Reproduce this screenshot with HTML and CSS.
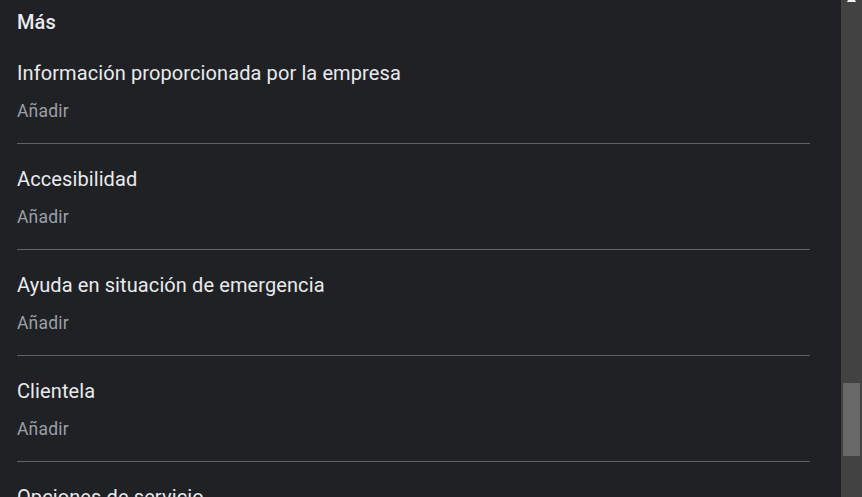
FILE: index.html
```html
<!DOCTYPE html>
<html lang="es">
<head>
<meta charset="utf-8">
<title>Más</title>
<link rel="stylesheet" href="styles.css">
</head>
<body>
<div class="frame">
  <main class="content">
    <h2 class="title">Más</h2>
    <section class="item">
      <h3 class="item-title">Información proporcionada por la empresa</h3>
      <div class="item-action">Añadir</div>
    </section>
    <section class="item">
      <h3 class="item-title">Accesibilidad</h3>
      <div class="item-action">Añadir</div>
    </section>
    <section class="item">
      <h3 class="item-title">Ayuda en situación de emergencia</h3>
      <div class="item-action">Añadir</div>
    </section>
    <section class="item">
      <h3 class="item-title">Clientela</h3>
      <div class="item-action">Añadir</div>
    </section>
    <section class="item">
      <h3 class="item-title">Opciones de servicio</h3>
      <div class="item-action">Añadir</div>
    </section>
  </main>
  <div class="scrollbar">
    <svg class="scroll-arrow" width="21" height="3" viewBox="0 0 21 3"><polygon points="7,0 14,0 15,2 6,2" fill="#f1f1f1"/></svg>
    <div class="scroll-thumb"></div>
  </div>
</div>
</body>
</html>
```

FILE: styles.css
```css
html, body {
  margin: 0;
  padding: 0;
  height: 100%;
  background: #202124;
  overflow: hidden;
}

.frame {
  display: flex;
  height: 497px;
  width: 862px;
  font-family: Roboto, "Liberation Sans", Arial, sans-serif;
}

.content {
  flex: 1;
  overflow: hidden;
  padding: 8px 31px 0 17px;
}

.title {
  margin: 0 0 2px;
  font-size: 20px;
  line-height: 28px;
  font-weight: 500;
  letter-spacing: 0.1px;
  color: #e8eaed;
}

.item {
  padding: 21px 0 20px;
  border-bottom: 1px solid #5f6368;
}

.item-title {
  margin: 0 0 12px;
  font-size: 20px;
  line-height: 28px;
  font-weight: 400;
  letter-spacing: 0.1px;
  color: #e8eaed;
}

.item-action {
  font-size: 17.5px;
  line-height: 24px;
  letter-spacing: 0.2px;
  color: #9aa0a6;
}

.scrollbar {
  width: 21px;
  flex: none;
  background: #424242;
  display: flex;
  flex-direction: column;
}

.scroll-arrow {
  display: block;
}

.scroll-thumb {
  margin: 380px 2px 0;
  height: 73px;
  background: #686868;
}
```
